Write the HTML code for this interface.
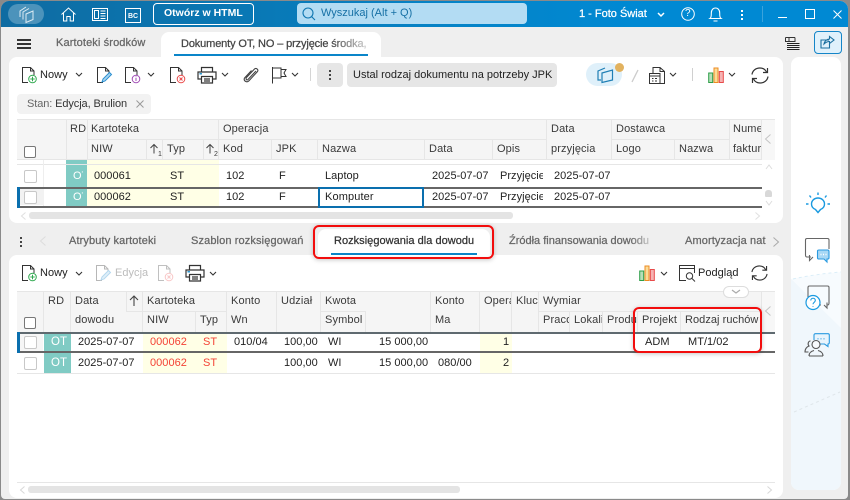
<!DOCTYPE html>
<html lang="pl"><head><meta charset="utf-8"><title>Dokumenty OT</title>
<style>
html,body{margin:0;padding:0;width:850px;height:500px;overflow:hidden;background:#8a8a8a}
body{position:relative;font-family:"Liberation Sans",sans-serif;font-size:11px;color:#222}
.a,.t,.c,svg.i{position:absolute}
.t{white-space:nowrap;line-height:14px;letter-spacing:.03px}
.m{-webkit-text-stroke:.25px currentColor}
.h{color:#3a3a3a;letter-spacing:.12px}
.g{color:#666;letter-spacing:.12px}
.r{color:#f44336}
.c{width:11px;height:11px;border:1px solid #c8c8c8;border-radius:2px;background:#fff}
.ln{position:absolute;background:#e6e6e6}
svg.i{overflow:visible;fill:none;stroke:#333;stroke-width:1}
.clip{overflow:hidden}
</style></head><body>
<svg width="0" height="0" style="position:absolute">
<symbol id="doc" viewBox="0 0 16 16" overflow="visible"><path d="M7 15.500H1.500V.5H9.500L13 4V8M9.500.5V4H13" fill="none" stroke="#333"/></symbol>
<symbol id="chev" viewBox="0 0 8 5" overflow="visible"><path d="M1 1L4 4L7 1" fill="none" stroke="#333" stroke-width="1.100"/></symbol>
<symbol id="print" viewBox="0 0 20 17" overflow="visible"><path d="M4.500 5V.5H15.500V5M4.500 12H1V5H19V12H15.500M4.500 9.500H15.500V16H4.500ZM7 12H13M7 14H13" fill="none" stroke="#333" stroke-width="1.200"/><path d="M2.500 6.800H5" stroke="#0a85c9" stroke-width="1.300"/></symbol>
<symbol id="chart" viewBox="0 0 16 16" overflow="visible"><rect x=".7" y="6" width="4" height="9.500" fill="#b5dfb9" stroke="#2e9e48"/><rect x="6" y="1" width="4" height="14.500" fill="#fbdc98" stroke="#ee8b22"/><rect x="11.300" y="4.500" width="4" height="11" fill="#f6b3b3" stroke="#e84a4a"/></symbol>
<symbol id="ref" viewBox="0 0 18 17" overflow="visible"><path d="M1 7.500C1.500 3.500 5 1 8.800 1C11.800 1 14.300 2.500 15.500 5M16.500 1V5.500H12M17 9.500C16.500 13.500 13 16 9.200 16C6.200 16 3.700 14.500 2.500 12M1.500 16V11.500H6" fill="none" stroke="#333" stroke-width="1.200"/></symbol>
</svg>

<!-- window -->
<div class="a" style="left:1px;top:1px;width:847px;height:498px;background:#efefef;border-radius:8px 8px 4px 4px"></div>
<div class="a" style="left:1px;top:1px;width:847px;height:26px;background:linear-gradient(90deg,#0f6ca2 0,#0a76b2 25%,#0584c8 55%,#0089d3 75%);border-radius:8px 8px 0 0"></div>

<!-- titlebar -->
<div class="a" style="left:8px;top:4px;width:36px;height:20px;border-radius:10px;background:#4c93bb"></div>
<svg class="i" style="left:17px;top:5px;stroke:#dcebf3" width="18" height="19" viewBox="0 0 18 19"><path d="M3 12V6L9 2M6 14.500V7L12 3.500M9 17.500V9L16 6V14.500Z"/></svg>
<svg class="i" style="left:61px;top:7px;stroke:#fff" width="15" height="15" viewBox="0 0 15 15"><path d="M.5 7.500L7.500 1L14.500 7.500M2.500 6V14H5.800V9.500H9.200V14H12.500V6"/></svg>
<svg class="i" style="left:92px;top:8px;stroke:#fff" width="16" height="13" viewBox="0 0 16 13"><rect x=".5" y=".5" width="15" height="12"/><rect x="2.500" y="2.500" width="4" height="8"/><path d="M8.500 3H13.500M8.500 5.500H13.500M8.500 8H13.500M8.500 10.500H13.500"/></svg>
<div class="a" style="left:125px;top:8px;width:14px;height:13px;border:1px solid #fff"></div>
<div class="t" style="left:128px;top:10px;color:#fff;font-size:7px;font-weight:bold;letter-spacing:0">BC</div>
<div class="a" style="left:153px;top:3px;width:99px;height:20px;border:1px solid #fff;border-radius:4px"></div>
<div class="t" style="left:164px;top:6px;color:#fff;font-weight:bold;font-size:10.500px;letter-spacing:0">Otwórz w HTML</div>
<div class="a" style="left:297px;top:3px;width:230px;height:21px;background:#b3dcf3;border-radius:4px"></div>
<svg class="i" style="left:302px;top:7px;stroke:#0f76b0;stroke-width:1.100" width="14" height="14" viewBox="0 0 14 14"><circle cx="6" cy="6" r="5"/><path d="M9.500 9.500L13 13"/></svg>
<div class="t" style="left:321px;top:6px;color:#1670a5;letter-spacing:0">Wyszukaj (Alt + Q)</div>
<div class="t m" style="left:579px;top:7px;color:#fff;font-size:11px;letter-spacing:0">1 - Foto Świat</div>
<svg class="i" style="left:657px;top:12px;stroke:#fff;stroke-width:1.500" width="8" height="6"><path d="M1 1L4 4L7 1"/></svg>
<svg class="i" style="left:681px;top:7px;stroke:#fff" width="14" height="14"><circle cx="7" cy="7" r="6.300"/></svg>
<div class="t" style="left:685px;top:7px;color:#fff;font-size:10px">?</div>
<svg class="i" style="left:709px;top:7px;stroke:#fff;stroke-width:1.100" width="13" height="15" viewBox="0 0 13 15"><path d="M1 11.500C2.500 10.500 2.300 8.500 2.300 6C2.300 3 4 1 6.500 1C9 1 10.700 3 10.700 6C10.700 8.500 10.500 10.500 12 11.500ZM4.500 14H8.500"/></svg>
<div class="a" style="left:741px;top:10px;width:2px;height:2px;background:#fff"></div>
<div class="a" style="left:741px;top:14px;width:2px;height:2px;background:#fff"></div>
<div class="a" style="left:741px;top:18px;width:2px;height:2px;background:#fff"></div>
<div class="a" style="left:762px;top:6px;width:1px;height:16px;background:#3aa3dc"></div>
<div class="a" style="left:778px;top:17px;width:9px;height:1px;background:#fff"></div>
<div class="a" style="left:805px;top:9px;width:8px;height:8px;border:1px solid #fff"></div>
<svg class="i" style="left:833px;top:10px;stroke:#fff" width="9" height="9"><path d="M.5.5L8.500 8.500M8.500.5L.5 8.500"/></svg>

<!-- tabs -->
<div class="a" style="left:17px;top:39px;width:14px;height:2px;background:#333"></div>
<div class="a" style="left:17px;top:43px;width:14px;height:2px;background:#333"></div>
<div class="a" style="left:17px;top:47px;width:14px;height:2px;background:#333"></div>
<div class="t m g" style="left:56px;top:36px">Kartoteki środków</div>
<div class="a" style="left:161px;top:32px;width:220px;height:26px;background:#fff;border-radius:8px 8px 0 0"></div>
<svg class="i" style="left:785px;top:37px" width="15" height="13" viewBox="0 0 15 13"><path d="M.5.5H10M.5.5V4.500H10V.5M4 .5V4.500" /><path d="M2 6.500H14.500M2 8.500H14.500M2 10.500H14.500M2 12.500H14.500" stroke="#222"/></svg>
<div class="a" style="left:814px;top:31px;width:26px;height:21px;background:#e0f1fb;border:1px solid #1485c8;border-radius:4px"></div>
<svg class="i" style="left:820px;top:35px;stroke:#1a6f9f;stroke-width:1.100" width="15" height="14" viewBox="0 0 15 14"><path d="M9 5H1V13H9.500V9"/><path d="M4 9C4.500 6 7 4 9.500 4V1.500L14 5L9.500 8.500V6.500C7.500 6.500 5.500 7.500 4 9Z"/></svg>

<!-- upper panel -->
<div class="a" style="left:9px;top:57px;width:774px;height:166px;background:#fff;border-radius:8px"></div>
<div class="a" style="left:161px;top:50px;width:220px;height:8px;background:#fff"></div>
<div class="t m" style="left:181px;top:37px;width:186px;overflow:hidden;color:#444;letter-spacing:-.13px;-webkit-mask-image:linear-gradient(90deg,#000 80%,rgba(0,0,0,.25))">Dokumenty OT, NO – przyjęcie środka,</div>
<div class="a" style="left:174px;top:54px;width:194px;height:2px;background:#0a85c9"></div>

<!-- toolbar 1 -->
<svg class="i" style="left:21px;top:67px" width="16" height="16"><use href="#doc"/><circle cx="11.500" cy="12" r="3.800" fill="#fff" stroke="#2fa84f"/><path d="M11.500 9.800V14.200M9.300 12H13.700" stroke="#2fa84f"/></svg>
<div class="t" style="left:40px;top:68px">Nowy</div>
<svg class="i" style="left:75px;top:72px" width="8" height="5"><use href="#chev"/></svg>
<svg class="i" style="left:96px;top:67px" width="16" height="16"><use href="#doc"/><path d="M6 15L7 12L13.500 5.500L15.500 7.500L9 14Z" fill="#a9d4f0" stroke="#2a8fd0"/></svg>
<svg class="i" style="left:124px;top:67px" width="16" height="16"><use href="#doc"/><circle cx="12" cy="12" r="3.800" fill="#fff" stroke="#a14db5"/><path d="M12 10.800V14M12 9.500V10" stroke="#a14db5"/></svg>
<svg class="i" style="left:147px;top:72px" width="8" height="5"><use href="#chev"/></svg>
<svg class="i" style="left:169px;top:67px" width="16" height="16"><use href="#doc"/><circle cx="12" cy="12" r="3.800" fill="#fff" stroke="#ea4a4a"/><path d="M10.500 10.500L13.500 13.500M13.500 10.500L10.500 13.500" stroke="#ea4a4a"/></svg>
<svg class="i" style="left:197px;top:67px" width="20" height="17"><use href="#print"/></svg>
<svg class="i" style="left:221px;top:72px" width="8" height="5"><use href="#chev"/></svg>
<svg class="i" style="left:243px;top:67px;stroke:#444;stroke-width:1.100" width="16" height="17" viewBox="0 0 16 17"><path d="M13 4L5 12.500C3.500 14 2.500 11.500 3.500 10.500L11.500 2C13 .5 15.800 2.500 14.500 4.500L6 13.800C4 16 .2 14 1.500 11L8.500 3.500"/></svg>
<svg class="i" style="left:272px;top:67px;stroke:#333" width="15" height="17" viewBox="0 0 15 17"><path d="M.5 0V16.500M.5 1H9V2.500H14L12 6L14 9.500H9V11H.5M9 2.500V9.500"/></svg>
<svg class="i" style="left:291px;top:72px" width="8" height="5"><use href="#chev"/></svg>
<div class="a" style="left:310px;top:68px;width:1px;height:13px;background:#d5d5d5"></div>
<div class="a" style="left:317px;top:63px;width:26px;height:24px;background:#e6e6e6;border-radius:4px"></div>
<div class="a" style="left:329px;top:70px;width:2px;height:2px;background:#444"></div>
<div class="a" style="left:329px;top:74px;width:2px;height:2px;background:#444"></div>
<div class="a" style="left:329px;top:78px;width:2px;height:2px;background:#444"></div>
<div class="a" style="left:347px;top:63px;width:210px;height:24px;background:#e6e6e6;border-radius:4px"></div>
<div class="t" style="left:353px;top:68px;letter-spacing:0">Ustal rodzaj dokumentu na potrzeby JPK</div>
<div class="a" style="left:586px;top:63px;width:36px;height:23px;background:#dff0fa;border-radius:12px"></div>
<svg class="i" style="left:597px;top:67px;stroke:#1f7fb5;stroke-width:1.200" width="17" height="16" viewBox="0 0 17 16"><path d="M4 13H1V4L8 1M5 15.500V6L15.500 3V13L5 15.500Z"/></svg>
<div class="a" style="left:615px;top:63px;width:9px;height:9px;border-radius:50%;background:#e2b25f"></div>
<svg class="i" style="left:631px;top:70px;stroke:#ccc;stroke-width:1.300" width="8" height="12"><path d="M7 0L1 12"/></svg>
<svg class="i" style="left:649px;top:67px;stroke:#333" width="16" height="17" viewBox="0 0 16 17"><path d="M4 6V.5H11L15.500 4.500V16.500H11M11 .5V4.500H15.500M.5 6.500H11V16.500H.5ZM.5 9H11M3 11.500H4.500M6 11.500H8M3 14H4.500M6 14H8"/></svg>
<svg class="i" style="left:669px;top:72px" width="8" height="5"><use href="#chev"/></svg>
<div class="a" style="left:692px;top:68px;width:1px;height:13px;background:#d0d0d0"></div>
<svg class="i" style="left:708px;top:67px" width="16" height="16"><use href="#chart"/></svg>
<svg class="i" style="left:728px;top:72px" width="8" height="5"><use href="#chev"/></svg>
<svg class="i" style="left:751px;top:67px" width="18" height="17"><use href="#ref"/></svg>

<!-- chip -->
<div class="a" style="left:17px;top:94px;width:134px;height:20px;background:#f2f2f2;border-radius:4px"></div>
<div class="t" style="left:27px;top:97px;letter-spacing:-.1px"><span style="color:#666">Stan:</span> <span style="color:#333">Edycja, Brulion</span></div>
<svg class="i" style="left:136px;top:100px;stroke:#999" width="8" height="8"><path d="M.5.5L7.500 7.500M7.500.5L.5 7.500"/></svg>

<!-- table 1 header -->
<div class="a" style="left:17px;top:120px;width:758px;height:40px;background:#f5f5f5"></div>
<div class="ln" style="left:17px;top:119px;width:758px;height:1px"></div>
<div class="ln" style="left:87px;top:139px;width:460px;height:1px"></div>
<div class="ln" style="left:611px;top:139px;width:118px;height:1px"></div>
<div class="ln" style="left:17px;top:159px;width:758px;height:1px"></div>
<div class="ln" style="left:66px;top:120px;width:1px;height:40px"></div>
<div class="ln" style="left:87px;top:120px;width:1px;height:40px"></div>
<div class="ln" style="left:146px;top:140px;width:1px;height:20px"></div>
<div class="ln" style="left:162px;top:140px;width:1px;height:20px"></div>
<div class="ln" style="left:203px;top:140px;width:1px;height:20px"></div>
<div class="ln" style="left:218px;top:120px;width:1px;height:40px"></div>
<div class="ln" style="left:271px;top:140px;width:1px;height:20px"></div>
<div class="ln" style="left:317px;top:140px;width:1px;height:20px"></div>
<div class="ln" style="left:424px;top:140px;width:1px;height:20px"></div>
<div class="ln" style="left:492px;top:140px;width:1px;height:20px"></div>
<div class="ln" style="left:546px;top:120px;width:1px;height:40px"></div>
<div class="ln" style="left:611px;top:120px;width:1px;height:40px"></div>
<div class="ln" style="left:674px;top:140px;width:1px;height:20px"></div>
<div class="ln" style="left:729px;top:120px;width:1px;height:40px"></div>
<div class="a" style="left:761px;top:120px;width:14px;height:40px;background:#f7f7f7"></div>
<div class="ln" style="left:761px;top:120px;width:1px;height:40px"></div>
<div class="t h" style="left:70px;top:122px">RD</div>
<div class="t h" style="left:91px;top:122px">Kartoteka</div>
<div class="t h" style="left:223px;top:122px">Operacja</div>
<div class="t h" style="left:551px;top:122px">Data</div>
<div class="t h" style="left:616px;top:122px">Dostawca</div>
<div class="t h clip" style="left:733px;top:122px;width:28px">Numer</div>
<div class="t h" style="left:91px;top:142px">NIW</div>
<div class="t h" style="left:167px;top:142px">Typ</div>
<div class="t h" style="left:223px;top:142px">Kod</div>
<div class="t h" style="left:276px;top:142px">JPK</div>
<div class="t h" style="left:322px;top:142px">Nazwa</div>
<div class="t h" style="left:429px;top:142px">Data</div>
<div class="t h" style="left:497px;top:142px">Opis</div>
<div class="t h" style="left:551px;top:142px">przyjęcia</div>
<div class="t h" style="left:616px;top:142px">Logo</div>
<div class="t h" style="left:679px;top:142px">Nazwa</div>
<div class="t h clip" style="left:733px;top:142px;width:28px">faktury</div>
<svg class="i" style="left:150px;top:144px;stroke:#444" width="8" height="10"><path d="M4 9.500V.5M.5 4L4 .5L7.500 4"/></svg>
<div class="t h" style="left:158px;top:150px;font-size:7px;line-height:9px">1</div>
<svg class="i" style="left:206px;top:144px;stroke:#444" width="8" height="10"><path d="M4 9.500V.5M.5 4L4 .5L7.500 4"/></svg>
<div class="t h" style="left:214px;top:150px;font-size:7px;line-height:9px">2</div>
<svg class="i" style="left:765px;top:134px;stroke:#c4c4c4" width="6" height="10"><path d="M5.500.5L.5 5L5.500 9.500"/></svg>
<div class="c" style="left:24px;top:146px;width:10px;height:10px;border-color:#777"></div>

<!-- table 1 rows -->
<div class="a" style="left:66px;top:160px;width:21px;height:27px;background:#80cbc4"></div>
<div class="a" style="left:87px;top:160px;width:132px;height:27px;background:#ffffe6"></div>
<div class="a" style="left:66px;top:187px;width:21px;height:20px;background:#80cbc4"></div>
<div class="a" style="left:87px;top:187px;width:132px;height:20px;background:#ffffe6"></div>
<div class="ln" style="left:17px;top:164px;width:745px;height:1px"></div>
<div class="ln" style="left:43px;top:160px;width:1px;height:47px;background:#eee"></div>
<div class="a" style="left:19px;top:189px;width:25px;height:16px;background:#f2f2f2"></div>
<div class="a" style="left:17px;top:187px;width:745px;height:2px;background:#666"></div>
<div class="a" style="left:17px;top:206px;width:745px;height:2px;background:#666"></div>
<div class="a" style="left:17px;top:187px;width:3px;height:21px;background:#0a6fae"></div>
<div class="a" style="left:318px;top:187px;width:102px;height:17px;border:2px solid #0a6fae;background:#fff"></div>
<div class="c" style="left:24px;top:170px"></div>
<div class="c" style="left:24px;top:191px"></div>
<div class="t clip" style="left:73px;top:169px;color:#fff;width:10px">OT</div>
<div class="t clip" style="left:73px;top:190px;color:#fff;width:10px">OT</div>
<div class="t" style="left:94px;top:169px">000061</div><div class="t" style="left:170px;top:169px">ST</div><div class="t" style="left:226px;top:169px">102</div><div class="t" style="left:279px;top:169px">F</div><div class="t" style="left:325px;top:169px">Laptop</div><div class="t" style="left:432px;top:169px">2025-07-07</div><div class="t clip" style="left:500px;top:169px;width:43px">Przyjęcie</div><div class="t" style="left:554px;top:169px">2025-07-07</div>
<div class="t" style="left:94px;top:190px">000062</div><div class="t" style="left:170px;top:190px">ST</div><div class="t" style="left:226px;top:190px">102</div><div class="t" style="left:279px;top:190px">F</div><div class="t" style="left:325px;top:190px;letter-spacing:.12px">Komputer</div><div class="t" style="left:432px;top:190px">2025-07-07</div><div class="t clip" style="left:500px;top:190px;width:43px">Przyjęcie</div><div class="t" style="left:554px;top:190px">2025-07-07</div>
<svg class="i" style="left:765px;top:164px;stroke:#ddd" width="8" height="6"><path d="M1 5L4 1L7 5"/></svg>
<div class="a" style="left:765px;top:190px;width:7px;height:7px;background:#d8d8d8;border-radius:3px 3px 1px 1px"></div>
<svg class="i" style="left:765px;top:200px;stroke:#ddd" width="8" height="6"><path d="M1 1L4 5L7 1"/></svg>
<div class="a" style="left:29px;top:212px;width:484px;height:7px;background:#e4e4e4;border-radius:3px"></div>
<svg class="i" style="left:21px;top:212px;stroke:#e0e0e0" width="5" height="8"><path d="M4.500.5L.5 4L4.500 7.500"/></svg>
<svg class="i" style="left:755px;top:212px;stroke:#e0e0e0" width="5" height="8"><path d="M.5.5L4.500 4L.5 7.500"/></svg>

<!-- tabs 2 -->
<div class="a" style="left:20px;top:237px;width:2px;height:2px;background:#444"></div>
<div class="a" style="left:20px;top:241px;width:2px;height:2px;background:#444"></div>
<div class="a" style="left:20px;top:245px;width:2px;height:2px;background:#444"></div>
<svg class="i" style="left:40px;top:236px;stroke:#ddd" width="6" height="10"><path d="M5.500.5L.5 5L5.500 9.500"/></svg>
<div class="t m g" style="left:69px;top:234px">Atrybuty kartoteki</div>
<div class="t m g" style="left:191px;top:234px">Szablon rozksięgowań</div>
<div class="a" style="left:318px;top:229px;width:172px;height:28px;background:#fff;border-radius:8px 8px 0 0"></div>
<div class="t m g" style="left:509px;top:234px;width:143px;overflow:hidden;letter-spacing:0;-webkit-mask-image:linear-gradient(90deg,#000 85%,rgba(0,0,0,.2))">Źródła finansowania dowodu</div>
<div class="t m g" style="left:685px;top:234px">Amortyzacja nat</div>
<svg class="i" style="left:773px;top:237px;stroke:#aaa" width="6" height="10"><path d="M.5.5L5.500 5L.5 9.500"/></svg>

<!-- lower panel -->
<div class="a" style="left:9px;top:255px;width:774px;height:243px;background:#fff;border-radius:8px"></div>
<div class="t m" style="left:334px;top:234px;color:#333">Rozksięgowania dla dowodu</div>
<div class="a" style="left:331px;top:253px;width:146px;height:2px;background:#0a85c9"></div>

<!-- toolbar 2 -->
<svg class="i" style="left:21px;top:265px" width="16" height="16"><use href="#doc"/><circle cx="11.500" cy="12" r="3.800" fill="#fff" stroke="#2fa84f"/><path d="M11.500 9.800V14.200M9.300 12H13.700" stroke="#2fa84f"/></svg>
<div class="t" style="left:40px;top:266px">Nowy</div>
<svg class="i" style="left:75px;top:271px" width="8" height="5"><use href="#chev"/></svg>
<svg class="i" style="left:95px;top:265px;opacity:.35" width="16" height="16"><use href="#doc"/><path d="M6 15L7 12L13.500 5.500L15.500 7.500L9 14Z" fill="#a9d4f0" stroke="#2a8fd0"/></svg>
<div class="t" style="left:115px;top:266px;color:#bcbcbc">Edycja</div>
<svg class="i" style="left:157px;top:265px;opacity:.3" width="16" height="16"><use href="#doc"/><circle cx="12" cy="12" r="3.800" fill="#fff" stroke="#ea4a4a"/><path d="M10.500 10.500L13.500 13.500M13.500 10.500L10.500 13.500" stroke="#ea4a4a"/></svg>
<svg class="i" style="left:185px;top:265px" width="20" height="17"><use href="#print"/></svg>
<svg class="i" style="left:209px;top:271px" width="8" height="5"><use href="#chev"/></svg>
<svg class="i" style="left:639px;top:265px" width="16" height="16"><use href="#chart"/></svg>
<svg class="i" style="left:660px;top:271px" width="8" height="5"><use href="#chev"/></svg>
<svg class="i" style="left:679px;top:265px;stroke:#333" width="17" height="17" viewBox="0 0 17 17"><path d="M7 15.500H.5V.5H15.500V8M.5 3.500H15.500"/><circle cx="10.500" cy="11" r="3.200"/><path d="M13 13.500L16 16.500"/></svg>
<div class="t" style="left:698px;top:266px">Podgląd</div>
<svg class="i" style="left:751px;top:265px" width="17" height="16"><use href="#ref"/></svg>

<!-- table 2 header -->
<div class="a" style="left:17px;top:292px;width:758px;height:40px;background:#f5f5f5"></div>
<div class="ln" style="left:17px;top:291px;width:758px;height:1px"></div>
<div class="ln" style="left:143px;top:311px;width:84px;height:1px"></div>
<div class="ln" style="left:321px;top:311px;width:45px;height:1px"></div>
<div class="ln" style="left:539px;top:311px;width:223px;height:1px"></div>
<div class="ln" style="left:43px;top:292px;width:1px;height:40px"></div>
<div class="ln" style="left:70px;top:292px;width:1px;height:40px"></div>
<div class="ln" style="left:126px;top:292px;width:1px;height:20px"></div>
<div class="ln" style="left:126px;top:311px;width:17px;height:1px"></div>
<div class="ln" style="left:142px;top:292px;width:1px;height:40px"></div>
<div class="ln" style="left:195px;top:312px;width:1px;height:20px"></div>
<div class="ln" style="left:226px;top:292px;width:1px;height:40px"></div>
<div class="ln" style="left:276px;top:292px;width:1px;height:40px"></div>
<div class="ln" style="left:320px;top:292px;width:1px;height:40px"></div>
<div class="ln" style="left:365px;top:312px;width:1px;height:20px"></div>
<div class="ln" style="left:430px;top:292px;width:1px;height:40px"></div>
<div class="ln" style="left:479px;top:292px;width:1px;height:40px"></div>
<div class="ln" style="left:511px;top:292px;width:1px;height:40px"></div>
<div class="ln" style="left:538px;top:292px;width:1px;height:40px"></div>
<div class="ln" style="left:569px;top:312px;width:1px;height:20px"></div>
<div class="ln" style="left:602px;top:312px;width:1px;height:20px"></div>
<div class="ln" style="left:637px;top:312px;width:1px;height:20px"></div>
<div class="ln" style="left:680px;top:312px;width:1px;height:20px"></div>
<div class="a" style="left:761px;top:292px;width:14px;height:40px;background:#f7f7f7"></div>
<div class="ln" style="left:761px;top:292px;width:1px;height:40px"></div>
<div class="a" style="left:723px;top:286px;width:24px;height:10px;background:#fff;border:1px solid #ddd;border-radius:6px"></div>
<svg class="i" style="left:731px;top:289px;stroke:#aaa;stroke-width:1.200" width="10" height="6"><path d="M1 1L5 4L9 1"/></svg>
<div class="t h" style="left:48px;top:294px">RD</div>
<div class="t h" style="left:75px;top:294px">Data</div>
<svg class="i" style="left:129px;top:295px;stroke:#444;stroke-width:1.100" width="10" height="12"><path d="M5 11V1M1 5L5 1L9 5"/></svg>
<div class="t h" style="left:147px;top:294px">Kartoteka</div>
<div class="t h" style="left:231px;top:294px">Konto</div>
<div class="t h" style="left:281px;top:294px">Udział</div>
<div class="t h" style="left:325px;top:294px">Kwota</div>
<div class="t h" style="left:435px;top:294px">Konto</div>
<div class="t h clip" style="left:484px;top:294px;width:27px">Operacja</div>
<div class="t h clip" style="left:516px;top:294px;width:22px">Klucz</div>
<div class="t h" style="left:543px;top:294px">Wymiar</div>
<div class="t h" style="left:75px;top:313px">dowodu</div>
<div class="t h" style="left:147px;top:313px">NIW</div>
<div class="t h" style="left:200px;top:313px">Typ</div>
<div class="t h" style="left:231px;top:313px">Wn</div>
<div class="t h" style="left:325px;top:313px">Symbol</div>
<div class="t h" style="left:435px;top:313px">Ma</div>
<div class="t h clip" style="left:543px;top:313px;width:26px">Pracownik</div>
<div class="t h clip" style="left:574px;top:313px;width:28px">Lokalizacja</div>
<div class="t h clip" style="left:607px;top:313px;width:30px">Produkt</div>
<div class="t h" style="left:642px;top:313px">Projekt</div>
<div class="t h" style="left:685px;top:313px;letter-spacing:.05px">Rodzaj ruchów</div>
<svg class="i" style="left:765px;top:306px;stroke:#c4c4c4" width="6" height="10"><path d="M5.500.5L.5 5L5.500 9.500"/></svg>
<div class="c" style="left:24px;top:317px;width:10px;height:10px;border-color:#777"></div>

<!-- table 2 rows -->
<div class="a" style="left:44px;top:334px;width:27px;height:40px;background:#80cbc4"></div>
<div class="a" style="left:143px;top:334px;width:84px;height:40px;background:#ffffe6"></div>
<div class="a" style="left:480px;top:334px;width:32px;height:40px;background:#ffffe6"></div>
<div class="a" style="left:17px;top:332px;width:758px;height:2px;background:#5f6a70"></div>
<div class="a" style="left:17px;top:351px;width:758px;height:2px;background:#666"></div>
<div class="a" style="left:17px;top:332px;width:3px;height:21px;background:#0a6fae"></div>
<div class="a" style="left:20px;top:334px;width:23px;height:17px;background:#f6f6f6"></div>
<div class="ln" style="left:17px;top:373px;width:758px;height:1px"></div>
<div class="c" style="left:24px;top:336px"></div>
<div class="c" style="left:24px;top:357px"></div>
<div class="t" style="left:51px;top:335px;color:#fff;font-size:11.500px">OT</div>
<div class="t" style="left:51px;top:356px;color:#fff;font-size:11.500px">OT</div>
<div class="t" style="left:78px;top:335px">2025-07-07</div><div class="t r" style="left:150px;top:335px">000062</div><div class="t r" style="left:203px;top:335px">ST</div><div class="t" style="left:234px;top:335px">010/04</div><div class="t" style="left:284px;top:335px">100,00</div><div class="t" style="left:328px;top:335px">WI</div><div class="t" style="left:379px;top:335px">15 000,00</div><div class="t" style="left:503px;top:335px">1</div><div class="t" style="left:645px;top:335px">ADM</div><div class="t" style="left:688px;top:335px">MT/1/02</div>
<div class="t" style="left:78px;top:356px">2025-07-07</div><div class="t r" style="left:150px;top:356px">000062</div><div class="t r" style="left:203px;top:356px">ST</div><div class="t" style="left:284px;top:356px">100,00</div><div class="t" style="left:328px;top:356px">WI</div><div class="t" style="left:379px;top:356px">15 000,00</div><div class="t" style="left:438px;top:356px">080/00</div><div class="t" style="left:503px;top:356px">2</div>

<!-- bottom -->
<div class="ln" style="left:17px;top:482px;width:758px;height:1px"></div>
<div class="a" style="left:28px;top:486px;width:432px;height:7px;background:#e4e4e4;border-radius:3px"></div>
<svg class="i" style="left:20px;top:486px;stroke:#d8d8d8" width="5" height="8"><path d="M4.500.5L.5 4L4.500 7.500"/></svg>
<svg class="i" style="left:767px;top:486px;stroke:#d8d8d8" width="5" height="8"><path d="M.5.5L4.500 4L.5 7.500"/></svg>

<!-- sidebar -->
<div class="a" style="left:791px;top:57px;width:50px;height:433px;border-radius:8px;overflow:hidden;background:#fff">
<svg width="50" height="433" style="position:absolute;left:0;top:0"><path d="M0 222Q25 217 50 215V433H0Z" fill="#f7fbfe"/><path d="M0 222L50 271V433H0Z" fill="#f0f7fc"/><path d="M2 222Q25 217 50 215" stroke="#dbeef8" stroke-dasharray="3 3" fill="none"/><path d="M3 355L49 335" stroke="#dfe6ea" stroke-dasharray="3 3" fill="none"/></svg>
</div>
<svg class="i" style="left:806px;top:192px;stroke:#1a9ae0;stroke-width:1.400" width="24" height="24" viewBox="0 0 24 24"><path d="M12 20.500L9.500 17.500C6.500 16.300 5.500 14 5.500 12C5.500 8.500 8.500 6 12 6C15.500 6 18.500 8.500 18.500 12C18.500 14 17.500 16.300 14.500 17.500Z"/><path d="M12 .5V3M3.500 3.500L5 5.500M20.500 3.500L19 5.500M0 12H2.500M21.500 12H24"/></svg>
<svg class="i" style="left:805px;top:238px;stroke:#666;stroke-width:1.100" width="26" height="25" viewBox="0 0 26 25"><path d="M6 19H2C1 19 .5 18 .5 17V2C.5 1 1 .5 2 .5H22.500C23.500 .5 24 1 24 2V11M8 19L4.500 22.500V17"/><path d="M12.500 13C12.500 12.500 13 12 14 12H22.500C23.500 12 24 12.500 24 13.500V20C24 20.500 23.500 21 22.500 21H22V24L19 21H14C13 21 12.500 20.500 12.500 20Z" fill="#a8d8f5" stroke="#2a9ae0"/><path d="M15.500 16.500H16.500M18 16.500H19M20.500 16.500H21.500" stroke="#fff" stroke-width="1.400"/></svg>
<svg class="i" style="left:805px;top:285px;stroke:#666;stroke-width:1.100" width="26" height="26" viewBox="0 0 26 26"><path d="M3 12V2.500C3 1.500 3.500 1 4.500 1H22.500C23.500 1 24 1.500 24 2.500V18C24 19 23.500 20 22.500 20H21.500M19 20L22 23V17.500M13 20H16"/><circle cx="8" cy="17.500" r="7" fill="#fff" stroke="#1a9ae0" stroke-width="1.200"/><path d="M5.800 15.500C5.800 12.500 10.300 12.500 10.300 15.500C10.300 17.300 8 17.300 8 19.300M8 21V21.800" stroke="#1a9ae0"/></svg>
<svg class="i" style="left:805px;top:333px;stroke:#555;stroke-width:1.100" width="26" height="24" viewBox="0 0 26 24"><path d="M9 7V2C9 1.300 9.500.7 10.500.7H23C23.800.7 24.300 1.300 24.300 2V9.500C24.300 10.500 23.800 11 23 11V13.500L19.500 11H15" stroke="#2a9ae0" fill="#e8f4fc"/><path d="M12.500 5.800H13.500M15.500 5.800H16.500M18.500 5.800H19.500" stroke="#2a9ae0"/><circle cx="11" cy="11.500" r="4" fill="#f8fbfe"/><path d="M4 23C4 19 7 18 9 17.500M18 23C18 19 15 18 13 17.500M4 23H18M5.500 8C3 8 2.500 11.500 4 13C1.500 14 0 15.500 0 19H3.500"/></svg>

<!-- red highlight boxes -->
<div class="a" style="left:313px;top:225px;width:177px;height:30px;border:2px solid #f20d0d;border-radius:6px;box-shadow:0 1px 5px rgba(0,0,0,.22),inset 0 0 3px rgba(0,0,0,.05)"></div>
<div class="a" style="left:633px;top:307px;width:125px;height:42px;border:2px solid #f20d0d;border-radius:6px;box-shadow:0 1px 5px rgba(0,0,0,.22)"></div>
</body></html>
